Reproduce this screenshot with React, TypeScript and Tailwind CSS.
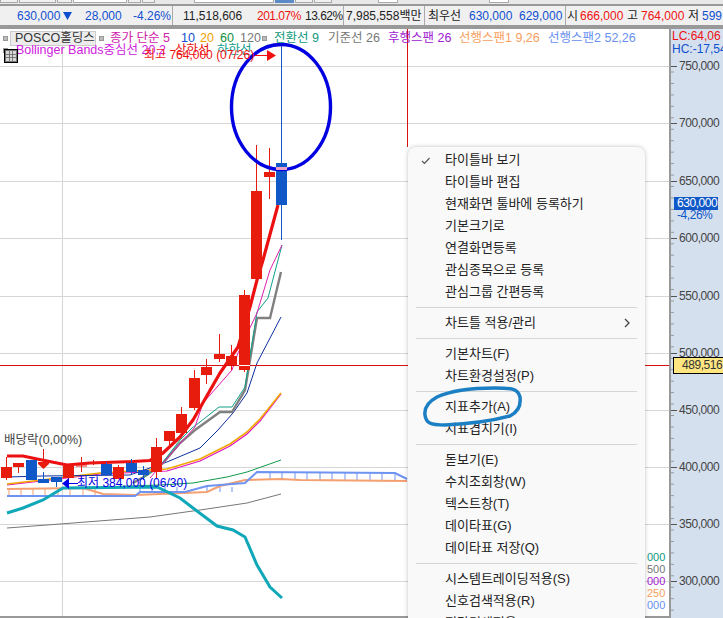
const sans = "font-['Liberation_Sans','Noto_Sans_CJK_KR',sans-serif]";

const blue = "text-[#1050d0]";
const red = "text-[#f01010]";

type Candle = { x: number; top: number; bottom: number; hi: number; lo: number; up: boolean };

const candles: Candle[] = [
  { x: 1, top: 467, bottom: 478, hi: 457, lo: 480, up: true },
  { x: 13, top: 463, bottom: 467, hi: 463, lo: 473, up: true },
  { x: 26, top: 460, bottom: 480, hi: 460, lo: 480, up: false },
  { x: 38, top: 479, bottom: 483, hi: 472, lo: 483, up: false },
  { x: 38, top: 462, bottom: 464, hi: 449, lo: 468, up: true },
  { x: 51, top: 477, bottom: 482, hi: 477, lo: 487, up: false },
  { x: 63, top: 466, bottom: 478, hi: 464, lo: 484, up: true },
  { x: 76, top: 466, bottom: 466, hi: 457, lo: 472, up: true },
  { x: 88, top: 463, bottom: 464, hi: 460, lo: 465, up: true },
  { x: 101, top: 464, bottom: 475, hi: 462, lo: 475, up: false },
  { x: 113, top: 467, bottom: 479, hi: 465, lo: 479, up: true },
  { x: 126, top: 463, bottom: 472, hi: 459, lo: 475, up: false },
  { x: 138, top: 470, bottom: 475, hi: 466, lo: 480, up: false },
  { x: 151, top: 447, bottom: 472, hi: 438, lo: 478, up: true },
  { x: 164, top: 431, bottom: 441, hi: 431, lo: 447, up: true },
  { x: 176, top: 414, bottom: 433, hi: 407, lo: 435, up: true },
  { x: 189, top: 378, bottom: 408, hi: 370, lo: 410, up: true },
  { x: 201, top: 367, bottom: 375, hi: 359, lo: 384, up: true },
  { x: 214, top: 354, bottom: 359, hi: 334, lo: 362, up: true },
  { x: 226, top: 356, bottom: 366, hi: 345, lo: 370, up: true },
  { x: 239, top: 295, bottom: 370, hi: 290, lo: 372, up: true },
  { x: 251, top: 191, bottom: 279, hi: 145, lo: 282, up: true },
  { x: 264, top: 172, bottom: 177, hi: 148, lo: 199, up: true },
  { x: 276, top: 163, bottom: 205, hi: 45, lo: 240, up: false },
];

const prices = [
  { y: 66, label: "750,000" },
  { y: 123, label: "700,000" },
  { y: 181, label: "650,000" },
  { y: 238, label: "600,000" },
  { y: 296, label: "550,000" },
  { y: 353, label: "500,000" },
  { y: 410, label: "450,000" },
  { y: 467, label: "400,000" },
  { y: 524, label: "350,000" },
  { y: 581, label: "300,000" },
];

const hatch = [9, 21, 33, 45, 58, 70, 83, 95, 140, 152, 165, 177, 207, 220, 232, 270, 282, 295, 307, 320, 332, 345, 357, 370, 382, 395];

function ChartDrawing() {
  return (
    <svg className="absolute left-0 top-0" width="669" height="589" viewBox="0 29 669 589" fill="none">
      {prices.map((p) => (
        <line key={p.y} x1="0" x2="669" y1={p.y + 0.5} y2={p.y + 0.5} stroke="#d6d6d6" />
      ))}
      <line x1="62.5" x2="62.5" y1="29" y2="617" stroke="#d6d6d6" />
      <line x1="0" x2="669" y1="617" y2="617" stroke="#999" strokeWidth="2" />

      {hatch.map((x) => (
        <line key={x} x1={x} x2={x} y1={x < 135 ? 488 : x < 257 ? 487 : 473} y2={x < 135 ? 496 : x < 257 ? 492 : 480} stroke={x < 135 ? "#f4a070" : "#6f93f0"} />
      ))}
      <polyline points="7,489 83,488 103,494 135,495 160,494 207,492 220,486 245,480 280,479 300,480 407,481" stroke="#f4a070" strokeWidth="2" />
      <polyline points="7,496 135,496 140,492 185,492 207,486 245,483 257,472 395,473 407,479" stroke="#6f93f0" strokeWidth="2" />
      <polyline points="7,528 60,524 150,517 200,510 247,503 281,494" stroke="#777" />
      <polyline points="63,488 100,487 160,485 193,483 227,477 247,472 281,460" stroke="#109848" />
      <polyline points="7,485 33,482 100,474 167,471 200,461 230,446 247,434 260,421 281,394" stroke="#e010c0" strokeWidth="1.2" />
      <polyline points="7,484 33,481 100,473 167,469 200,459 230,444 247,432 260,419 281,393" stroke="#f0a800" strokeWidth="1.6" />
      <polyline points="7,477 43,476 130,475 167,462 200,448 218,430 233,413 247,393 257,363 281,317" stroke="#1030a0" />
      <polyline points="133,483 147,475 163,463 180,443 195,430 220,412 232,412 245,390 257,318 270,318 281,272" stroke="#808080" strokeWidth="2.4" />
      <polyline points="140,480 160,466 180,440 192,428 200,422 219,407 232,407 245,387 257,312 268,298 282,245" stroke="#10a088" />
      <polyline points="150,478 170,455 195,427 203,403 232,370 238,353 257,313 270,270 282,245" stroke="#e020b0" />
      <polyline points="7,456 23,456 37,459 57,463 67,465 90,463 133,461.5 150,460.5 163,453 180,437 193,420 220,373 238,347 250,307 257,280 263,260 278,205" stroke="#ec1010" strokeWidth="3.2" strokeLinejoin="round" />

      {candles.map((c, i) => {
        const color = c.up ? "#e81c0c" : "#1058c8";
        return (
          <g key={i}>
            <line x1={c.x + 5.5} x2={c.x + 5.5} y1={c.hi} y2={c.lo} stroke={color} />
            {c.bottom > c.top ? <rect x={c.x} y={c.top} width="11" height={c.bottom - c.top} fill={color} /> : <line x1={c.x} x2={c.x + 11} y1={c.top} y2={c.top} stroke={color} />}
          </g>
        );
      })}
      <polygon points="38,464 49,464 43.5,469" fill="#e81c0c" />

      <polyline points="7,513 23,508 43,500 63,488 157,487 180,498 193,508 217,526 233,530 245,537 257,565 270,587 282,598" stroke="#10a8b8" strokeWidth="3" />
      <line x1="0" x2="669" y1="365.5" y2="365.5" stroke="#d81010" />
      <line x1="239" x2="250" y1="365.5" y2="365.5" stroke="#fff" />
      <line x1="407.5" x2="407.5" y1="29" y2="147" stroke="#d81010" />
      <ellipse cx="281" cy="107" rx="49.5" ry="62.5" stroke="#0000e0" strokeWidth="3.4" />
      <rect x="276" y="167" width="11" height="3" fill="#f0a0c8" />
      <line x1="255" x2="270" y1="55.5" y2="55.5" stroke="#f01010" />
      <polygon points="267,50 276,55.5 267,61" fill="#f01010" />
      <line x1="68" x2="78" y1="483.5" y2="483.5" stroke="#0000e8" />
      <polygon points="62,483.5 69,478 69,489" fill="#0000e8" />
    </svg>
  );
}

function Dot({ className = "" }: { className?: string }) {
  return <span className={`h-[5px] w-[5px] shrink-0 border border-[#999] bg-[#bbb] ${className}`} />;
}

function LegendOverlay() {
  return (
    <div className="absolute left-0 top-0 h-full w-[669px] text-[12.5px] leading-[15px]">
      <div className="flex h-[16px] items-center whitespace-nowrap pl-[3px] pt-[2px] [&>*]:shrink-0">
        <Dot />
        <span className="ml-[2px] w-[86px] border border-[#ccc] bg-[#ececec] pl-[4px] leading-[13px] text-[#333]">POSCO홀딩스</span>
        <Dot className="ml-[3px]" />
        <span className="ml-[6px] w-[71px] text-[#d020a8]">종가 단순 5</span>
        <span className="w-[19px] text-[#1050d0]">10</span>
        <span className="w-[20px] text-[#f0a000]">20</span>
        <span className="w-[20px] text-[#109040]">60</span>
        <span className="w-[22px] text-[#777]">120</span>
        <Dot />
        <span className="ml-[7px] w-[54px] text-[#109880]">전환선 9</span>
        <span className="w-[60px] text-[#777]">기준선 26</span>
        <span className="w-[71px] text-[#a020d0]">후행스팬 26</span>
        <span className="w-[89px] text-[#f8a060]">선행스팬1 9,26</span>
        <span className="text-[#6890f0]">선행스팬2 52,26</span>
      </div>
      <div className="relative -mt-[2px] flex h-[14px] items-center whitespace-nowrap pl-[3px] [&>*]:shrink-0">
        <Dot />
        <span className="ml-[8px] w-[159px] text-[#d020e0]">Bollinger Bands중심선 20,2</span>
        <span className="w-[42px] text-[#e81010]">상한선</span>
        <span className="text-[#10a090]">하한선</span>
        <span className="absolute left-[144px] top-[5px] text-[12px] text-[#f01010]">최고 764,000 (07/26)</span>
      </div>
      <span className="absolute left-[4px] top-[20px] grid h-[14px] w-[14px] grid-cols-3 gap-px border border-black bg-[#777] p-px">
        {[0, 1, 2, 3, 4, 5, 6, 7, 8].map((n) => <span key={n} className="bg-[#d8d8d8]" />)}
      </span>
      <span className="absolute left-[4px] top-[404px] text-[12.5px] text-[#444]">배당락(0,00%)</span>
      <span className="absolute left-[77px] top-[447px] whitespace-nowrap text-[12px] text-[#0000e8]">최저 384,000 (06/30)</span>
      <div className="absolute left-[647px] top-[522px] flex flex-col text-[11px] leading-[12px]">
        <span className="text-[#109880]">000</span>
        <span className="text-[#777]">500</span>
        <span className="text-[#a020d0]">000</span>
        <span className="text-[#f8a060]">250</span>
        <span className="text-[#6890f0]">000</span>
      </div>
    </div>
  );
}

function PriceAxis() {
  const minor = Array.from({ length: 52 }, (_, i) => 43 + i * 11.45);
  return (
    <div className="relative h-full w-[54px] overflow-hidden border-l-2 border-[#999] bg-[#d5e0ef] text-[12px] leading-[13px] tracking-[-0.45px]">
      <svg className="absolute left-0 top-0" width="52" height="589" viewBox="0 0 52 589">
        {minor.map((y) => (
          <line key={y} x1="0" x2="3" y1={y} y2={y} stroke="#999" />
        ))}
        {prices.map((p) => (
          <line key={p.y} x1="0" x2="6" y1={p.y - 29 + 0.5} y2={p.y - 29 + 0.5} stroke="#555" />
        ))}
      </svg>
      <div className="relative whitespace-nowrap pl-[1px] pt-[1px] tracking-normal text-[#f01010]">LC:64,06</div>
      <div className="relative whitespace-nowrap pl-[1px] tracking-normal text-[#1050d0]">HC:-17,54</div>
      {prices.map((p) => (
        <span key={p.y} className="absolute left-[8px] text-[#444]" style={{ top: p.y - 29 - 6 }}>{p.label}</span>
      ))}
      <span className="absolute left-[3px] top-[168px] h-[13px] w-[44px] bg-[#1058c8] pl-[3px] text-white">630,000</span>
      <span className="absolute left-[6px] top-[180px] text-[#1058c8]">-4,26%</span>
      <span className="absolute left-[2px] top-[328px] h-[17px] w-[52px] border border-black bg-[#ffe680] pl-[8px] leading-[15px] text-[#333]">489,516</span>
    </div>
  );
}

const groups = [
  ["타이틀바 보기", "타이틀바 편집", "현재화면 툴바에 등록하기", "기본크기로", "연결화면등록", "관심종목으로 등록", "관심그룹 간편등록"],
  ["차트틀 적용/관리"],
  ["기본차트(F)", "차트환경설정(P)"],
  ["지표추가(A)", "지표겹치기(I)"],
  ["돋보기(E)", "수치조회창(W)", "텍스트창(T)", "데이타표(G)", "데이타표 저장(Q)"],
  ["시스템트레이딩적용(S)", "신호검색적용(R)", "전략검색적용"],
];

function ContextMenu() {
  return (
    <div className="absolute left-[408px] top-[147px] h-[480px] w-[237px] overflow-hidden rounded-lg bg-[#f9f9f9] pt-[2px] text-[13px] text-[#222] shadow-[0_0_4px_rgba(0,0,0,0.25)]">
      {groups.map((items, g) => (
        <div key={g}>
          {g > 0 ? (
            <div className="flex h-[9px] items-center px-2">
              <div className="h-px w-full bg-[#d6d6d6]" />
            </div>
          ) : null}
          {items.map((label) => (
            <div key={label} className="relative flex h-[22px] items-center pl-[37px]">
              {label === "타이틀바 보기" ? (
                <svg className="absolute left-[13px] top-[8px]" width="10" height="8" viewBox="0 0 10 8" fill="none">
                  <path d="M1 4 L3.5 6.5 L8.5 1" stroke="#555" strokeWidth="1.2" />
                </svg>
              ) : null}
              {label}
              {label === "차트틀 적용/관리" ? (
                <svg className="absolute left-[215px] top-[6px]" width="8" height="10" viewBox="0 0 8 10" fill="none">
                  <path d="M2 1 L6 5 L2 9" stroke="#444" strokeWidth="1.3" />
                </svg>
              ) : null}
            </div>
          ))}
        </div>
      ))}
    </div>
  );
}

export default function App() {
  return (
    <div className={`relative h-[618px] w-[723px] overflow-hidden bg-white ${sans}`}>
      <div className="flex h-[6px] items-start gap-px border-b-2 border-[#999] bg-[#e8e8e8]">
        <span className="h-[3px] w-[18px] border border-t-0 border-[#aaa] bg-[#f0f0f0]" />
        <span className="h-[3px] w-[37px] border border-t-0 border-[#aaa] bg-[#f0f0f0]" />
        <span className="h-[3px] w-[15px] border border-t-0 border-[#aaa] bg-[#f0f0f0]" />
        <span className="h-[3px] w-[54px] border border-t-0 border-[#aaa] bg-white" />
        <span className="h-[3px] w-[13px] border border-t-0 border-[#aaa] bg-[#f0f0f0]" />
        <span className="h-[3px] w-[13px] border border-t-0 border-[#aaa] bg-[#f0f0f0]" />
        <span className="ml-[38px] h-[3px] w-[80px] border border-t-0 border-[#aaa] bg-white" />
        <span className="h-[3px] w-[19px] bg-[#5b8ac8]" />
        <span className="h-[3px] w-[18px] border border-t-0 border-[#aaa] bg-[#f0f0f0]" />
        <span className="h-[3px] w-[18px] border border-t-0 border-[#aaa] bg-[#f0f0f0]" />
        <span className="ml-[45px] h-[3px] w-[20px] border border-t-0 border-[#aaa] bg-white" />
        <span className="ml-[90px] h-[3px] w-[20px] border border-t-0 border-[#aaa] bg-white" />
      </div>

      <div className="flex h-[19px] items-center overflow-hidden whitespace-nowrap bg-[#f0f0f0] text-[12px] [&>*]:shrink-0">
        <span className={`ml-[17px] w-[46px] ${blue}`}>630,000</span>
        <svg className="w-[22px]" width="22" height="10" viewBox="0 0 22 10"><polygon points="0,1 9,1 4.5,9" fill="#1050d0" /></svg>
        <span className={`w-[48px] ${blue}`}>28,000</span>
        <span className={`w-[39px] ${blue}`}>-4.26%</span>
        <span className="h-full w-[11px] border-l border-[#aaa]" />
        <span className="w-[74px] text-[#222]">11,518,606</span>
        <span className={`w-[48px] tracking-[-0.5px] ${red}`}>201.07%</span>
        <span className="w-[38px] tracking-[-0.5px] text-[#222]">13.62%</span>
        <span className="h-full w-[3px] border-l border-[#aaa]" />
        <span className="w-[78px] text-[#222]">7,985,558백만</span>
        <span className="h-full w-[4px] border-l border-[#aaa]" />
        <span className="w-[41px] text-[#222]">최우선</span>
        <span className={`w-[50px] ${blue}`}>630,000</span>
        <span className={`w-[46px] ${blue}`}>629,000</span>
        <span className="h-full w-[2px] border-l border-[#aaa]" />
        <span className="w-[13px] text-[#222]">시</span>
        <span className={`w-[47px] ${red}`}>666,000</span>
        <span className="w-[14px] text-[#222]">고</span>
        <span className={`w-[47px] ${red}`}>764,000</span>
        <span className="w-[14px] text-[#222]">저</span>
        <span className={blue}>599,1</span>
      </div>
      <div className="h-[4px] border-y-2 border-y-[#999]" />

      <div className="flex h-[589px]">
        <div className="relative h-full w-[669px]">
          <ChartDrawing />
          <LegendOverlay />
        </div>
        <PriceAxis />
      </div>

      <ContextMenu />
      <svg className="absolute left-0 top-0" width="723" height="618" viewBox="0 0 723 618" fill="none">
        <path d="M520 397 C518 388 510 388 495 388 C470 388 450 391 437 397 C428 402 424 408 425 415 C426 423 430 425 445 425 C470 424 495 420 510 416 C518 412 521 405 520 397" stroke="#1b7fc4" strokeWidth="3.5" strokeLinecap="round" />
      </svg>
    </div>
  );
}
